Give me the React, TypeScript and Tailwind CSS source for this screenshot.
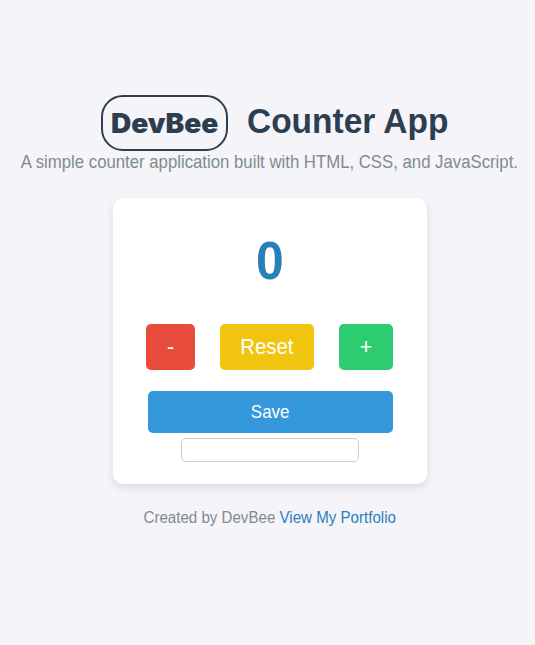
export default function App() {
  return (
    <div className="flex h-[645px] w-[535px] flex-col items-center overflow-hidden bg-[#f4f4f9] pt-[95px] font-['Liberation_Sans',Arial,sans-serif]">
      <header className="flex flex-col items-center">
        <h1 className="flex h-14 items-center gap-5 pl-[26px] text-[35.5px] font-bold leading-10 whitespace-nowrap text-[#2c3e50]">
          <span className="flex h-14 w-[127px] items-center justify-center rounded-[22px] border-2 border-[#2c3e50] pt-0.5 font-['Inter',sans-serif] text-[27px] font-black">
            <span className="inline-block scale-x-[1.04]">DevBee</span>
          </span>
          <span className="-mt-1 -ml-px origin-left scale-x-[0.943]">Counter App</span>
        </h1>
        <p className="scale-x-[0.947] pl-1 text-[17.7px] leading-[22px] whitespace-nowrap text-[#7f8c8d]">
          A simple counter application built with HTML, CSS, and JavaScript.
        </p>
      </header>
      <main className="mt-[25px] ml-[5px] flex h-[286px] w-[314px] flex-col items-center rounded-[10px] bg-white pt-8 shadow-[0_4px_8px_rgba(0,0,0,0.1)]">
        <div className="h-[94px] scale-x-[0.94] text-[53px] font-bold leading-[61px] text-[#2980b9]">0</div>
        <div className="flex h-[46px] gap-[25px] text-[21.3px] text-white">
          <button className="w-[49px] rounded-[5px] bg-[#e74c3c] pt-0.5">-</button>
          <button className="w-[94px] rounded-[5px] bg-[#f1c40f] pt-0.5">
            <span className="inline-block scale-x-[0.955]">Reset</span>
          </button>
          <button className="mr-px w-[54px] rounded-[5px] bg-[#2ecc71] pt-0.5">+</button>
        </div>
        <button className="mt-[21px] h-[42px] w-[245px] shrink-0 rounded-[5px] bg-[#3498db] text-[17.7px] text-white">
          <span className="inline-block scale-x-[0.96]">Save</span>
        </button>
        <input aria-label="Saved counts" className="mt-[5px] mr-px h-6 w-[178px] rounded-[5px] border border-[#ccc]" />
      </main>
      <footer className="mt-6 ml-[5px] scale-x-[0.944] text-[16px] leading-[20px] whitespace-nowrap text-[#7f8c8d]">
        Created by DevBee <a href="#" className="text-[#2980b9]">View My Portfolio</a>
      </footer>
    </div>
  );
}
